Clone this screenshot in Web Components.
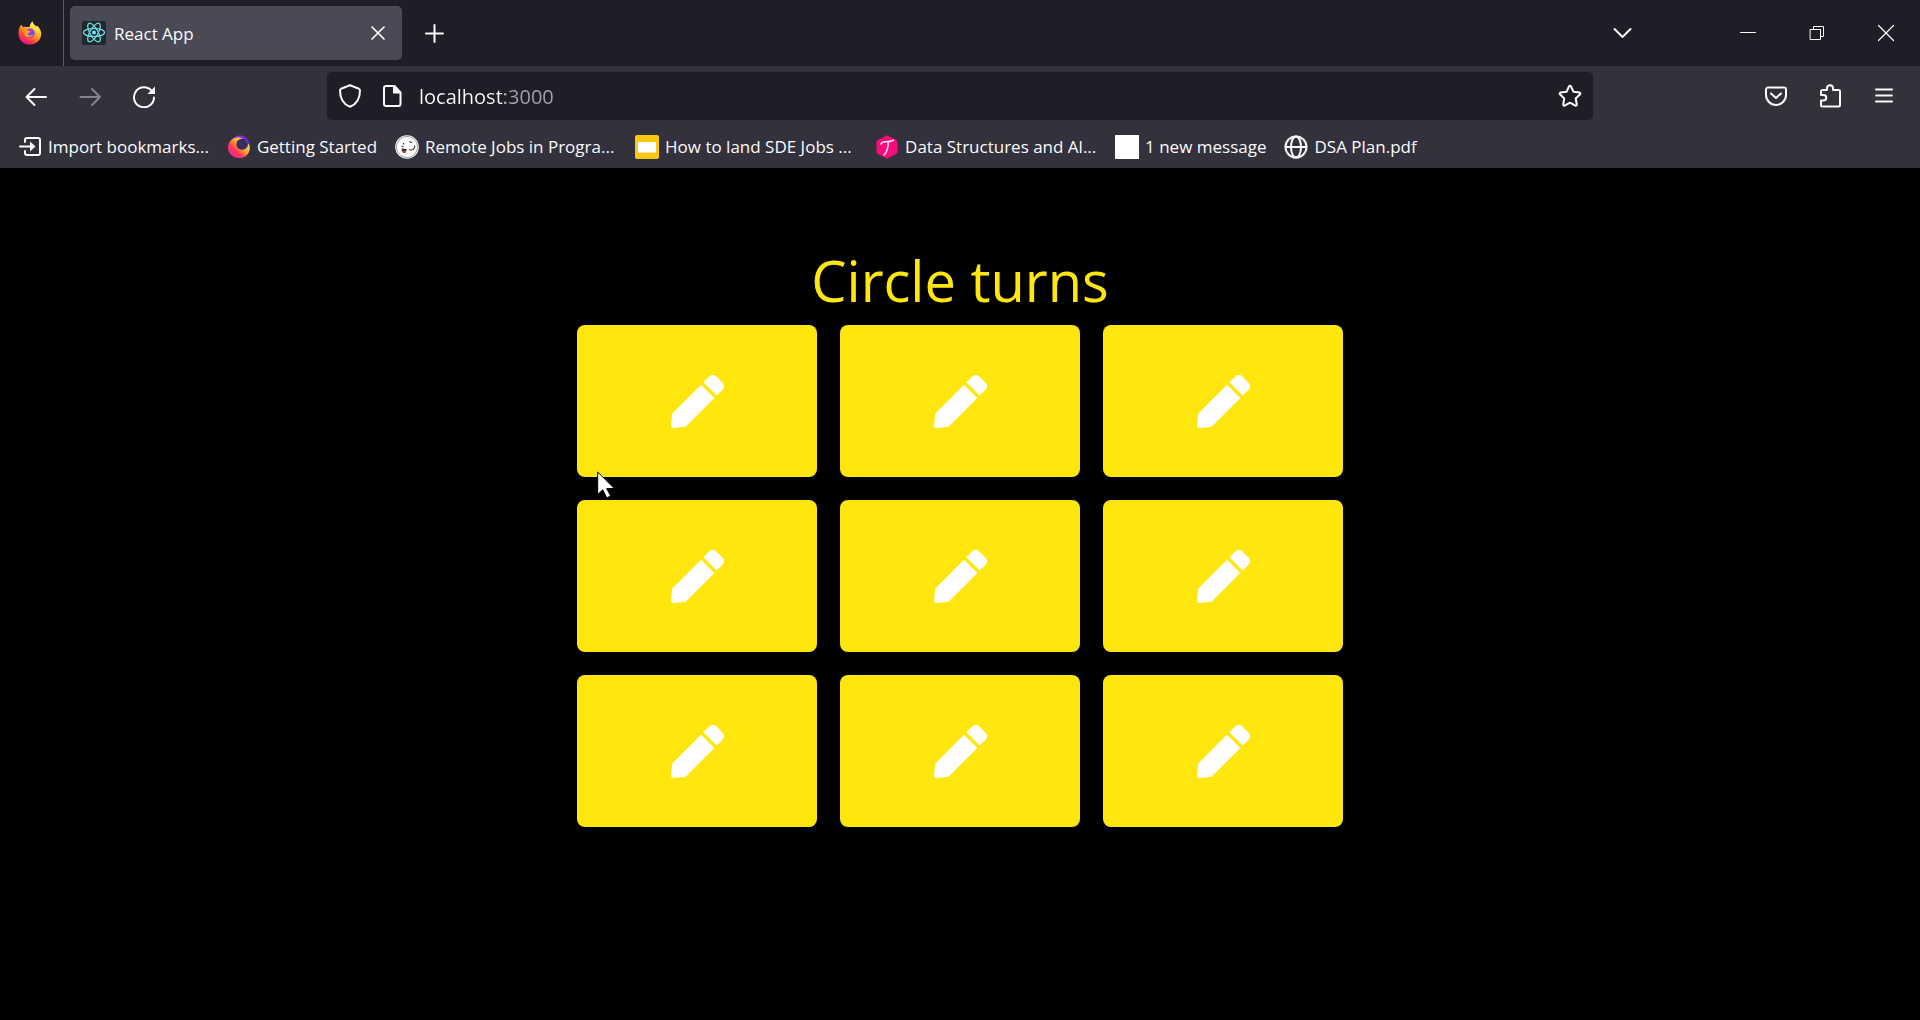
<!DOCTYPE html>
<html lang="en">
<head>
<meta charset="utf-8">
<title>React App</title>
<style>
  html, body { margin: 0; min-height: 100%; background: #000; }
  body { font-family: "Open Sans", "Noto Sans", sans-serif; color: #fbfbfe; }
</style>
</head>
<body>
<browser-window></browser-window>

<template id="icons">
  <svg data-name="firefox" viewBox="0 0 24 24">
    <defs>
      <linearGradient id="ff" x1="0.85" y1="0.05" x2="0.25" y2="0.95"><stop offset="0" stop-color="#fff44f"/><stop offset=".35" stop-color="#ffc02e"/><stop offset=".55" stop-color="#ff8a1c"/><stop offset=".78" stop-color="#ff3a4a"/><stop offset="1" stop-color="#f0148a"/></linearGradient>
      <linearGradient id="fp" x1="0.3" y1="0" x2="0.7" y2="1"><stop offset="0" stop-color="#a03cf0"/><stop offset="1" stop-color="#5b4dfa"/></linearGradient>
    </defs>
    <path fill="url(#ff)" d="M1.600 6.500C2 5.200 3 4.300 3.800 3.800c0 .9.4 1.700 1 2.200 1.100-.4 2.200-.4 3.400 0C9.600 6.200 11 6.100 11.800 5.500 11.800 3 13.400 1.200 14.600.400c.2 2.600 2.300 3.700 3.800 5.200.4-.300.500-.8.500-1.200 2.700 2.200 4.300 5.200 4.300 8.400 0 6.200-5 10.800-11.400 10.800S.5 18.800.5 12.700c0-2.300.3-4.500 1.100-6.200z"/>
    <path fill="#ffe14a" d="M12 6c0-2.800 1.400-4.600 2.600-5.600.3 2.700 2.300 3.800 3.800 5.400 1.800 2 2.700 4.500 2.300 7.200C19.500 8.500 16 7.500 12 6z"/>
    <circle cx="12" cy="12.200" r="4.700" fill="url(#fp)"/>
    <path fill="#ff9a1e" d="M5.500 8.500c2.200-.8 4.300-.1 5.300 1.200 1.200.2 2 .5 2 .9 0 .8-2 1-2.800 1.700-.3 1 .2 1.900 1.300 2.100 1.800.3 2.800-.9 4.100-.6-.9 1.900-3 2.600-4.700 2.400C7 15.700 5 12.700 5.500 8.500z"/>
  </svg>
  <svg data-name="firefox-swirl" viewBox="0 0 24 24">
    <defs>
      <linearGradient id="sw" x1="0.9" y1="0.2" x2="0.2" y2="0.9"><stop offset="0" stop-color="#ffe84d"/><stop offset=".4" stop-color="#ffa436"/><stop offset=".7" stop-color="#ff3c5a"/><stop offset="1" stop-color="#f0268c"/></linearGradient>
      <linearGradient id="sp" x1="0" y1="0" x2="1" y2="1"><stop offset="0" stop-color="#a82be8"/><stop offset="1" stop-color="#4d2bd0"/></linearGradient>
    </defs>
    <path fill="url(#sp)" d="M6 3.500C10-.500 17-.5 20.500 4.400c2 2.600 2.500 5 2 8.100L16 14 9 6z"/>
    <circle cx="14.800" cy="8.700" r="5.300" fill="#34305c"/>
    <path fill="url(#sw)" d="M5.500 4C9 1.800 14 2 16 4.200c-3.500-.5-6.300 1.500-6.500 4.800-.2 3.400 2.500 5.700 5.500 5.700 3.300 0 6.600-2.500 6.200-6.300 1.300 1.300 1.600 3 1.600 5C22.500 19 18 23 12 23S1 18.500 1 12.500C1 9 2.500 6 5.500 4z"/>
  </svg>
  <svg data-name="react" viewBox="0 0 24 24">
    <rect width="24" height="24" rx="2" fill="#22282a"/>
    <circle cx="12" cy="11.500" r="2" fill="#6fe6ee"/>
    <g fill="none" stroke="#6fe6ee" stroke-width="1.200"><ellipse cx="12" cy="11.500" rx="10.500" ry="4"/><ellipse cx="12" cy="11.500" rx="10.500" ry="4" transform="rotate(60 12 11.500)"/><ellipse cx="12" cy="11.500" rx="10.500" ry="4" transform="rotate(120 12 11.500)"/></g>
  </svg>
  <svg data-name="close" viewBox="0 0 24 24"><path d="M6 6l12 12M18 6L6 18" class="s" stroke-width="1.700"/></svg>
  <svg data-name="plus" viewBox="0 0 24 24"><path d="M12.500 4v17M4 12.500h17" class="s" stroke-width="2"/></svg>
  <svg data-name="chevron" viewBox="0 0 24 24"><path d="M4.500 8l8 8 8-8" class="s" stroke-width="2"/></svg>
  <svg data-name="minimize" viewBox="0 0 24 24"><path d="M4.500 11.500h15" class="s" stroke-width="1" stroke-linecap="butt"/></svg>
  <svg data-name="restore" viewBox="0 0 24 24"><path d="M5.500 8.500h10v10h-10zM8.500 8.500v-3h10v10h-3" class="s" stroke-width="1"/></svg>
  <svg data-name="window-close" viewBox="0 0 24 24"><path d="M4.500 4.500l15 15M19.500 4.500l-15 15" class="s" stroke-width="1.200"/></svg>
  <svg data-name="back" viewBox="0 0 24 24"><path d="M22 13H2.500M10.500 5L2.500 13l8 8" class="s" stroke-width="2"/></svg>
  <svg data-name="forward" viewBox="0 0 24 24"><path d="M2.500 13H22M14 5l8 8-8 8" class="s" stroke-width="2"/></svg>
  <svg data-name="reload" viewBox="0 0 24 24"><path d="M20.500 8A10 10 0 1 0 22 13.500" class="s" stroke-width="2"/><path d="M23 2.500V10H15.500z" fill="currentColor"/></svg>
  <svg data-name="shield" viewBox="0 0 24 24"><path d="M12 1.200l9 3.600c.7.300 1 .8 1 1.500C22 14 19.500 20 12 22.800 4.500 20 2 14 2 6.300c0-.7.300-1.200 1-1.500z" class="s" stroke-width="2"/></svg>
  <svg data-name="page" viewBox="0 0 24 24"><path d="M6 2h8.500L20.500 8.500V20a2 2 0 0 1-2 2H6a2 2 0 0 1-2-2V4a2 2 0 0 1 2-2z" class="s" stroke-width="2"/><path d="M13 1.500V9.500h8z" fill="currentColor"/></svg>
  <svg data-name="star" viewBox="0 0 24 24"><path d="M11.100 2.300c.4-.8 1.400-.8 1.800 0l2.600 5.500 6 .8c.9.100 1.200 1.100.6 1.700l-4.400 4.200 1.100 6c.2.900-.7 1.500-1.500 1.100L12 18.700l-5.300 2.900c-.8.400-1.700-.2-1.500-1.100l1.100-6-4.400-4.200c-.6-.6-.3-1.600.6-1.700l6-.8z" class="s" stroke-width="2"/></svg>
  <svg data-name="pocket" viewBox="0 0 24 24"><path d="M4 3.500h16a2 2 0 0 1 2 2v5.500a10 10 0 0 1-20 0V5.500a2 2 0 0 1 2-2zM7 9.500l5 4.500 5-4.500" class="s" stroke-width="2"/></svg>
  <svg data-name="puzzle" viewBox="0 0 24 24"><path d="M3 7.500a1.500 1.500 0 0 1 1.500-1.500H9V4.200a3 3 0 0 1 6 0V6h5.500A1.500 1.500 0 0 1 22 7.500v13.500a1.500 1.500 0 0 1-1.500 1.500h-16A1.500 1.500 0 0 1 3 21v-4.500h2.500a2.700 2.700 0 0 0 0-5.500H3z" class="s" stroke-width="2"/></svg>
  <svg data-name="menu" viewBox="0 0 24 24"><path d="M4 5.500h16M4 11.500h16M4 17.500h16" class="s" stroke-width="2"/></svg>
  <svg data-name="import" viewBox="0 0 24 24"><path d="M7 7V5a2 2 0 0 1 2-2h11a2 2 0 0 1 2 2v13a2 2 0 0 1-2 2H9a2 2 0 0 1-2-2v-2M2 11.500h12" class="s" stroke-width="2"/><path d="M12 6.500l5.500 5-5.500 5z" fill="currentColor"/></svg>
  <svg data-name="face" viewBox="0 0 24 24"><circle cx="12" cy="12" r="11.800" fill="#fff"/><circle cx="12" cy="12" r="10.600" fill="none" stroke="#8a8078" stroke-width=".8"/><path d="M8.500 8v1.500M14.500 6l1.200 1.500 1.500-.6M6.500 11l2 1M19.500 10.500c1 3.500-3.500 6-5.500 3.500" fill="none" stroke="#4a4038" stroke-width="1.100"/><path d="M6.500 13.500l5 .5c.3 2-.8 4-2.200 4-1.600 0-2.600-2-2.800-4.500z" fill="#5b1c22"/><path d="M8 16h2.500v1.500H9z" fill="#e8505a"/></svg>
  <svg data-name="slides" viewBox="0 0 24 24"><rect width="24" height="24" rx="2" fill="#fcc912"/><rect x="3" y="7" width="18" height="10.500" fill="#fff"/></svg>
  <svg data-name="hexagon" viewBox="0 0 24 24"><path d="M12 .300l9.500 5a2 2 0 0 1 1 1.700v10a2 2 0 0 1-1 1.700l-9.500 5-9.500-5a2 2 0 0 1-1-1.700V7a2 2 0 0 1 1-1.700z" fill="#fb0b7c"/><path d="M6 9c1-3.500 6-1 12.500-3.800M13.500 6.500c-.3 5-1.500 11-4.500 13.500" fill="none" stroke="#ffe3f0" stroke-width="1.600" stroke-linecap="round"/></svg>
  <svg data-name="blank" viewBox="0 0 24 24"><path d="M0 0h24v24H0z" fill="#fff"/></svg>
  <svg data-name="globe" viewBox="0 0 24 24"><g fill="none" stroke="currentColor" stroke-width="2"><circle cx="12" cy="12" r="10.500"/><ellipse cx="12" cy="12" rx="5" ry="10.500"/><path d="M1.500 12h21"/></g></svg>
  <svg data-name="pen" viewBox="0 0 512 512"><path fill="currentColor" d="M290.740 93.240l128.020 128.020-277.990 277.990-114.140 12.600C11.350 513.540-1.560 500.620.140 485.340l12.700-114.220 277.900-277.880zm207.200-19.060l-60.110-60.110c-18.750-18.750-49.160-18.750-67.910 0l-56.550 56.550 128.020 128.020 56.550-56.550c18.750-18.760 18.750-49.160 0-67.910z"/></svg>
  <svg data-name="pointer" viewBox="0 0 18 28"><path d="M.7 1v22.500l5-4.700 4 8 4-1.700-4-7.600h7.600z" fill="#fff" stroke="#000" stroke-width="1"/></svg>
</template>

<script>
const define = (name, css, html, setup) => customElements.define(name, class extends HTMLElement {
  constructor() {
    super();
    this.attachShadow({ mode: "open" }).innerHTML = `<style>*{box-sizing:border-box}${css}</style>${html}`;
  }
  connectedCallback() { if (setup) setup.call(this); }
});

const button = "button{display:flex;align-items:center;justify-content:center;margin:0;padding:0;border:0;background:none;color:inherit;font:inherit}";

define("ui-icon",
  ":host{display:block;flex:none;width:24px;height:24px}svg{display:block;width:100%;height:100%}.s{fill:none;stroke:currentColor;stroke-linecap:round;stroke-linejoin:round}",
  "",
  function () {
    const art = document.getElementById("icons").content.querySelector(`[data-name="${this.getAttribute("name")}"]`);
    this.shadowRoot.append(art.cloneNode(true));
  });

define("icon-button",
  `:host{display:block;flex:none;width:54px;height:48px}${button}button{width:100%;height:100%}`,
  "<button type='button'><slot></slot></button>",
  function () { this.shadowRoot.querySelector("button").setAttribute("aria-label", this.getAttribute("label")); });

define("browser-tab",
  `:host{display:flex;align-items:center;gap:8px;width:332px;height:54px;padding:0 12px;border-radius:5px;background:#4a4956;font-size:17px}
   .title{flex:1} ${button} button{width:24px;height:24px}`,
  "<slot name='icon'></slot><span class='title'><slot></slot></span><button type='button' aria-label='Close tab'><ui-icon name='close'></ui-icon></button>");

define("tab-strip",
  `:host{display:flex;align-items:center;height:66px;background:#1f1e26}
   .home{display:flex;align-items:center;justify-content:center;width:64px;height:66px;padding-right:3px;border-right:1px solid #5b5a68;margin-right:6px}
   .grow{flex:1} .new{width:64px} .window{display:flex;margin-left:64px} .window icon-button{width:69px}`,
  `<div class="home"><ui-icon name="firefox"></ui-icon></div>
   <browser-tab><ui-icon slot="icon" name="react"></ui-icon>React App</browser-tab>
   <icon-button class="new" label="New tab"><ui-icon name="plus"></ui-icon></icon-button>
   <span class="grow"></span>
   <icon-button label="List all tabs"><ui-icon name="chevron"></ui-icon></icon-button>
   <div class="window">
     <icon-button label="Minimize"><ui-icon name="minimize"></ui-icon></icon-button>
     <icon-button label="Restore"><ui-icon name="restore"></ui-icon></icon-button>
     <icon-button label="Close"><ui-icon name="window-close"></ui-icon></icon-button>
   </div>`);

/* The host name is bright and the port is dim: the input's text is filled by a two-stop background. */
define("address-bar",
  `:host{display:flex;align-items:center;height:48px;border-radius:5px;background:#1f1e26;padding-left:11px}
   input{flex:1;min-width:0;margin:0;border:0;outline:0;padding:2px 0 0 15px;font:inherit;font-size:20px;line-height:28px;color:#fbfbfe;
     background:linear-gradient(90deg,#fbfbfe 86px,#a3a3a8 86px) content-box text;-webkit-text-fill-color:transparent}
   ui-icon + ui-icon{margin-left:18px} icon-button{width:46px}`,
  `<ui-icon name="shield"></ui-icon><ui-icon name="page"></ui-icon>
   <input type="text" value="localhost:3000" spellcheck="false" aria-label="Address">
   <icon-button label="Bookmark this page"><ui-icon name="star"></ui-icon></icon-button>`);

define("nav-bar",
  `:host{display:flex;align-items:center;height:60px;padding:0 9px}
   address-bar{flex:1;margin:0 156px} .off{color:#85848e}`,
  `<icon-button label="Back"><ui-icon name="back"></ui-icon></icon-button>
   <icon-button class="off" label="Forward"><ui-icon name="forward"></ui-icon></icon-button>
   <icon-button label="Reload"><ui-icon name="reload"></ui-icon></icon-button>
   <address-bar></address-bar>
   <icon-button label="Pocket"><ui-icon name="pocket"></ui-icon></icon-button>
   <icon-button label="Extensions"><ui-icon name="puzzle"></ui-icon></icon-button>
   <icon-button label="Menu"><ui-icon name="menu"></ui-icon></icon-button>`);

define("bookmark-item",
  `:host{display:block} :host([wide]){width:222px} a{display:flex;align-items:center;gap:6px;color:inherit;text-decoration:none;white-space:nowrap}`,
  "<a href='#'><slot name='icon'></slot><span><slot></slot></span></a>");

define("bookmark-bar",
  `:host{display:flex;align-items:center;gap:18px;height:42px;padding:0 18px;font-size:17px;line-height:24px}`,
  [["import", "Import bookmarks..."], ["firefox-swirl", "Getting Started"], ["face", "Remote Jobs in Progra...", "wide"],
   ["slides", "How to land SDE Jobs ...", "wide"], ["hexagon", "Data Structures and Al...", "wide"], ["blank", "1 new message"], ["globe", "DSA Plan.pdf"]]
    .map(([icon, text, size = ""]) => `<bookmark-item ${size}><ui-icon slot="icon" name="${icon}"></ui-icon>${text}</bookmark-item>`).join(""));

define("game-card",
  `:host{display:block}${button}button{width:100%;height:152px;border-radius:8px;background:#ffe60f;color:#fff}ui-icon{width:53px;height:53px}`,
  "<button type='button' aria-label='Empty cell'><ui-icon name='pen'></ui-icon></button>");

define("game-board",
  `:host{display:flex;flex-direction:column;align-items:center;padding-top:72px}
   h1{margin:0 0 4px;font-size:56px;line-height:81px;font-weight:400;color:#ffe60f}
   .grid{position:relative;display:grid;grid-template-columns:repeat(3,240px);gap:23px}
   .pointer{position:absolute;left:20px;top:146px;width:18px;height:28px}`,
  `<h1>Circle turns</h1><div class="grid">${"<game-card></game-card>".repeat(9)}<ui-icon class="pointer" name="pointer"></ui-icon></div>`);

define("browser-window",
  `:host{display:block} header{background:#32313c}`,
  `<header><tab-strip></tab-strip><nav-bar></nav-bar><bookmark-bar></bookmark-bar></header><main><game-board></game-board></main>`);
</script>
</body>
</html>
